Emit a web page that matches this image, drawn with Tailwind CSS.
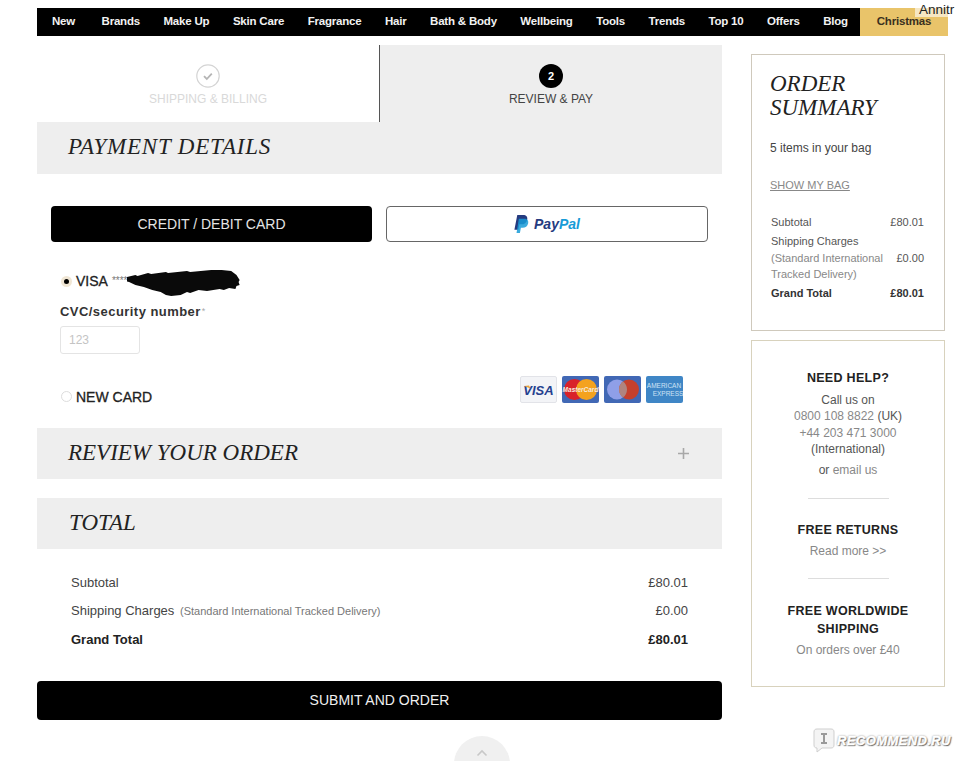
<!DOCTYPE html>
<html lang="en">
<head>
  <meta charset="UTF-8" />
  <title>Checkout - Review and Pay</title>
  <script src="https://cdn.jsdelivr.net/npm/@tailwindcss/browser@4"></script>
</head>

<body class="relative h-[761px] w-[960px] overflow-hidden bg-white font-['Liberation_Sans',sans-serif] text-[#333]">

  <!-- Top nav -->
  <nav class="ml-[37px] mt-2 flex h-7 w-[911px] items-center bg-black pl-[15px] text-[11.5px] font-bold tracking-[-0.2px] text-[#f2f2f2]">
    <div class="flex flex-1 items-center justify-between pr-3">
      <a class="mr-[3px]">New</a><a>Brands</a><a>Make Up</a><a>Skin Care</a><a>Fragrance</a><a>Hair</a><a>Bath &amp; Body</a><a>Wellbeing</a><a>Tools</a><a>Trends</a><a>Top 10</a><a>Offers</a><a>Blog</a>
    </div>
    <a class="flex h-full w-[88px] items-center justify-center bg-[#e9c46a] text-[#3a3020]">Christmas</a>
  </nav>
  <div class="absolute right-0 top-[2px] h-[15px] w-[45px] bg-white/60 pl-1 text-[13.5px] leading-[15px] text-[#222]">Annitr</div>

  <div class="ml-[37px] flex items-start gap-[29px]">

    <!-- Main column -->
    <main class="w-[685px]">
      <!-- Steps -->
      <div class="mt-[9px] flex h-[77px]">
        <div class="flex w-[342px] flex-col items-center pt-[19px]">
          <svg class="h-6 w-6" viewBox="0 0 24 24" fill="none">
            <circle cx="12" cy="12" r="11.2" stroke="#d4d4d4" stroke-width="1.2" />
            <path d="M8 12.2l2.8 2.8 5-5.4" stroke="#b5b5b5" stroke-width="1.8" />
          </svg>
          <span class="mt-1 text-xs leading-[14px] text-[#d9d9d9]">SHIPPING &amp; BILLING</span>
        </div>
        <div class="flex w-[343px] flex-col items-center border-l border-[#555] bg-[#eeeeee] pt-[19px]">
          <span class="flex h-6 w-6 items-center justify-center rounded-full bg-black text-[11px] font-bold text-white">2</span>
          <span class="mt-1 text-xs leading-[14px] text-[#444]">REVIEW &amp; PAY</span>
        </div>
      </div>

      <!-- Payment details -->
      <div class="flex h-[52px] items-center bg-[#eeeeee] pb-0.5 pl-[31px]">
        <h2 class="font-['Liberation_Serif',serif] text-[23px] tracking-[0.8px] italic text-[#222]">PAYMENT DETAILS</h2>
      </div>

      <div class="mt-8 flex gap-[14px] pl-[14px]">
        <button class="h-9 w-[321px] rounded-[4px] bg-black text-sm text-[#e4e4e4]">CREDIT / DEBIT CARD</button>
        <button class="flex h-9 w-[322px] items-center justify-center gap-[5px] rounded-[4px] border border-[#666] bg-white">
          <svg class="h-[18px] w-[15px]" viewBox="0 0 14 17">
            <path d="M3 0h5.500C11.500 0 13 1.700 12.400 4.400 11.800 7.400 9.700 8.800 6.800 8.800H5L4 14H0.300z" fill="#253b80" />
            <path d="M4.500 3.500h5c2.800 0 4.300 1.600 3.800 4.200-.6 3-2.600 4.300-5.300 4.300H6.400L5.500 17H2.300z" fill="#179bd7" opacity=".85" />
          </svg>
          <span class="text-sm font-bold italic"><span class="text-[#253b80]">Pay</span><span class="text-[#179bd7]">Pal</span></span>
        </button>
      </div>

      <!-- Saved card -->
      <div class="relative mt-[28px] flex h-[22px] items-center pl-6 text-sm font-bold text-[#333]">
        <span class="flex h-[11px] w-[11px] items-center justify-center rounded-full bg-[#f0e6d4]"><span class="h-[5px] w-[5px] rounded-full bg-black"></span></span>
        <span class="ml-1 font-normal text-[#222] [-webkit-text-stroke:0.3px_#222]">VISA</span>
        <span class="ml-1 text-[10px] font-normal text-[#777]">****</span>
        <svg class="absolute left-[90px] top-[-2px] h-[28px] w-[120px]" viewBox="0 0 114 28" preserveAspectRatio="none">
          <path d="M0 9l8-2 2 1 10-3 3 1 14-2 2 1 18-2 3 1 20-2 10 0 9 1 5 4 3 5-1 2 1 3-3 1-1 3-6-1-5 2-4-1-12 2-8-1-8 3-3-1-6 3-9 1-5-1-5-3-8-2-8-3-8-2-6-3-8-2z" fill="#0a0a0a" />
        </svg>
      </div>
      <label class="mt-3 block pl-[23px] text-[13px] leading-[15px] font-bold tracking-[0.45px] text-[#333]">CVC/security number<span class="ml-px align-top text-[9px] font-normal text-[#aaa]">*</span></label>
      <input class="ml-[23px] mt-[7px] block h-[28px] w-[80px] rounded-[3px] border border-[#e4e4e4] pl-2 text-xs placeholder:text-[#c4c4c4]" placeholder="123" />

      <!-- New card + card logos -->
      <div class="mt-[22px] flex h-[27px] items-center justify-between pl-6 pr-[39px]">
        <div class="flex items-center pt-[14px]">
          <span class="h-[11px] w-[11px] rounded-full border border-[#ddd]"></span>
          <span class="ml-1 text-sm font-normal text-[#222] [-webkit-text-stroke:0.3px_#222]">NEW CARD</span>
        </div>
        <div class="flex gap-[5px]">
          <svg class="h-[27px] w-[37px]" viewBox="0 0 37 27">
            <rect x=".5" y=".5" width="36" height="26" rx="1.500" fill="#f3f4f7" stroke="#e2e3e8" />
            <text x="18.500" y="18.500" text-anchor="middle" font-family="Liberation Sans" font-size="13" font-weight="700" font-style="italic" fill="#25418f">VISA</text>
            <path d="M4 10l5-.5 1.500 3z" fill="#e9a23b" />
          </svg>
          <svg class="h-[27px] w-[37px]" viewBox="0 0 37 27">
            <rect width="37" height="27" rx="2" fill="#4168b5" />
            <circle cx="12.500" cy="13.500" r="10.500" fill="#d9222a" />
            <circle cx="24.500" cy="13.500" r="10.500" fill="#f4a21f" />
            <text x="18.500" y="16" text-anchor="middle" font-family="Liberation Sans" font-size="6.500" font-weight="700" font-style="italic" fill="#f6eadf">MasterCard</text>
          </svg>
          <svg class="h-[27px] w-[37px]" viewBox="0 0 37 27">
            <rect width="37" height="27" rx="2" fill="#4168b5" />
            <circle cx="13" cy="13.500" r="10" fill="#8f9fe8" />
            <circle cx="25" cy="13.500" r="10" fill="#c5402d" />
            <path d="M19 5.500a10 10 0 0 1 0 16a10 10 0 0 1 0-16z" fill="#b0847f" />
          </svg>
          <svg class="h-[27px] w-[37px]" viewBox="0 0 37 27">
            <rect width="37" height="27" rx="2" fill="#3f86c6" />
            <text x="18" y="12" text-anchor="middle" font-family="Liberation Sans" font-size="6.500" fill="#cfe3f5">AMERICAN</text>
            <text x="22" y="20" text-anchor="middle" font-family="Liberation Sans" font-size="6.500" fill="#cfe3f5">EXPRESS</text>
          </svg>
        </div>
      </div>

      <!-- Review your order -->
      <div class="mt-[25px] flex h-[51px] items-center justify-between bg-[#eeeeee] pl-[31px] pr-[33px]">
        <h2 class="font-['Liberation_Serif',serif] text-[23px] italic text-[#222]">REVIEW YOUR ORDER</h2>
        <svg class="h-[11px] w-[11px]" viewBox="0 0 11 11"><path d="M5.500 0v11M0 5.500h11" stroke="#a8a8a8" stroke-width="1.600" /></svg>
      </div>

      <!-- Total -->
      <div class="mt-[19px] flex h-[51px] items-center bg-[#eeeeee] pl-[32px]">
        <h2 class="font-['Liberation_Serif',serif] text-[23px] italic text-[#222]">TOTAL</h2>
      </div>
      <div class="mt-[26px] space-y-[12.500px] px-[34px] text-[13px] leading-[15.500px] text-[#444]">
        <div class="flex justify-between"><span>Subtotal</span><span>£80.01</span></div>
        <div class="flex justify-between">
          <span>Shipping Charges <span class="ml-0.5 text-[11px] text-[#777]">(Standard International Tracked Delivery)</span></span>
          <span>£0.00</span>
        </div>
        <div class="flex justify-between font-bold text-[#222]"><span>Grand Total</span><span>£80.01</span></div>
      </div>

      <button class="mt-[33px] h-[39px] w-full rounded-[4px] bg-black text-sm text-[#f0f0f0]">SUBMIT AND ORDER</button>

      <div class="ml-[417px] mt-[16px] flex h-14 w-14 justify-center rounded-full bg-[#f0f0f0] pt-[13px]">
        <svg class="h-[8px] w-3" viewBox="0 0 12 8" fill="none"><path d="M1.500 6.500L6 2l4.500 4.500" stroke="#c8c8c8" stroke-width="1.600" /></svg>
      </div>
    </main>

    <!-- Sidebar -->
    <aside class="w-[194px]">
      <div class="mt-[18px] h-[277px] border border-[#cfc9bc] px-[18px] pt-[17px]">
        <h2 class="font-['Liberation_Serif',serif] text-[23px] leading-[24px] italic text-[#222]">ORDER<br />SUMMARY</h2>
        <p class="mt-[21px] text-xs leading-[14px] text-[#444]">5 items in your bag</p>
        <a class="mt-[23px] block text-[11px] leading-[14px] text-[#888] underline">SHOW MY BAG</a>
        <div class="mt-[22px] pl-px pr-[2px] text-[11px] leading-[16.800px] text-[#555]">
          <div class="flex justify-between pb-0.5"><span>Subtotal</span><span>£80.01</span></div>
          <div class="flex items-center justify-between">
            <span class="w-[120px]">Shipping Charges <span class="text-[#888]">(Standard International Tracked Delivery)</span></span>
            <span>£0.00</span>
          </div>
          <div class="flex justify-between pt-0.5 font-bold text-[#333]"><span>Grand Total</span><span>£80.01</span></div>
        </div>
      </div>

      <div class="mt-[9px] flex h-[347px] flex-col items-center border border-[#d8d2bd] pt-[29px] text-center text-xs leading-[16.500px] text-[#555]">
        <h3 class="text-[12.5px] font-bold tracking-[0.3px] text-[#222]">NEED HELP?</h3>
        <p class="mt-[5px]">Call us on</p>
        <p><span class="text-[#888]">0800 108 8822</span> (UK)</p>
        <p class="text-[#888]">+44 203 471 3000</p>
        <p>(International)</p>
        <p class="mt-1">or <span class="text-[#888]">email us</span></p>
        <div class="mt-5 w-[81px] border-t border-[#ddd]"></div>
        <h3 class="mt-[23px] text-[12.5px] font-bold tracking-[0.3px] text-[#222]">FREE RETURNS</h3>
        <p class="mt-1 text-[#888]">Read more &gt;&gt;</p>
        <div class="mt-[19px] w-[81px] border-t border-[#ddd]"></div>
        <h3 class="mt-[23px] text-[12.5px] leading-[18px] font-bold tracking-[0.3px] text-[#222]">FREE WORLDWIDE<br />SHIPPING</h3>
        <p class="mt-[4px] text-[#888]">On orders over £40</p>
      </div>
    </aside>
  </div>

  <!-- Watermark -->
  <div class="absolute left-[813px] top-[728px] flex items-center gap-[2px]">
    <svg class="h-[25px] w-[22px]" viewBox="0 0 22 25">
      <path d="M4 1h14c2 0 3 1 3 3v13c0 2-1 3-3 3H9l-5 4v-4c-2 0-3-1-3-3V4c0-2 1-3 3-3z" fill="#f4f4f4" stroke="#cfcfcf" />
      <path d="M8 6h6M11 6v9M8 15h6" stroke="#9a9a9a" stroke-width="2" />
    </svg>
    <span class="text-[13px] font-bold italic tracking-[0.4px] text-white [-webkit-text-stroke:0.4px_#fff] [text-shadow:0_0_2px_#666,1px_1px_1px_#666]">RECOMMEND.RU</span>
  </div>
</body>
</html>
